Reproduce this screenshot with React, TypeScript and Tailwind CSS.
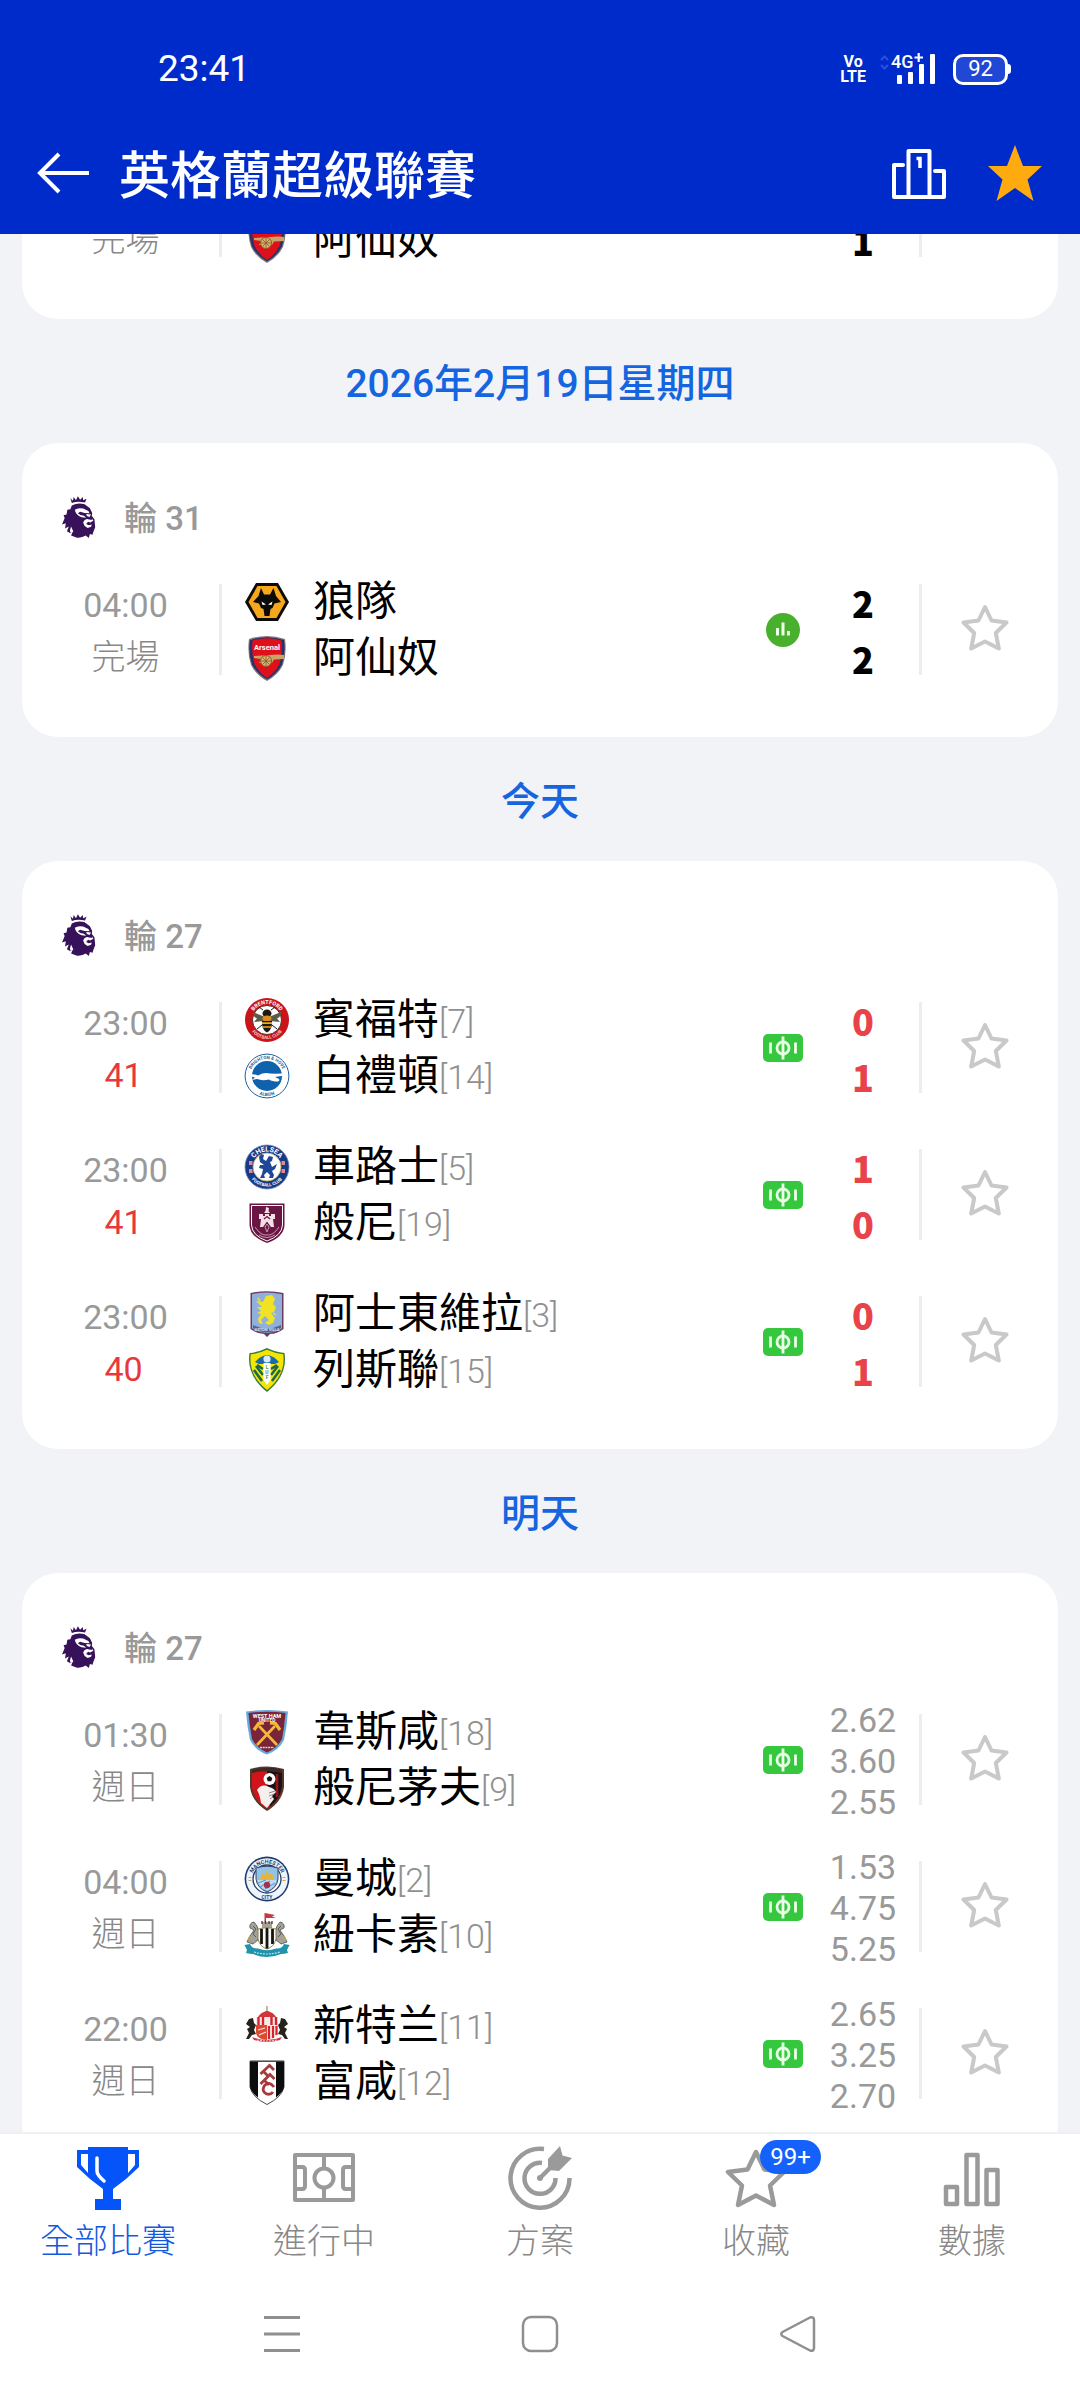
import type { ReactNode } from "react";

const FONT = "font-[Roboto,'Noto_Sans_CJK_TC',sans-serif]";

/* ---------- club crests ---------- */

function Crest({ children }: { children: ReactNode }) {
  return (
    <svg viewBox="0 0 46 46" className="size-[46px] shrink-0" aria-hidden="true">
      {children}
    </svg>
  );
}

const Wolves = () => (
  <Crest>
    <path d="M12 4H34L45 23L34 42H12L1 23Z" fill="#0d0b08" />
    <path d="M13.5 7H32.5L41.5 23L32.5 39H13.5L4.500 23Z" fill="#f5a81c" />
    <path d="M17 9L20 15.500H26L29.500 9L32 17L37 23L30.500 24.500L28.500 29L26.500 30L25.500 37H20.500L19.500 30L17 29L15 24.500L9 23L14.500 17Z" fill="#0d0b08" />
    <path d="M17.500 22.500L22 25.500L18.500 26Z M28.500 22.500L24 25.500L27.500 26Z" fill="#fff" />
  </Crest>
);

const Arsenal = () => (
  <Crest>
    <path d="M5 4Q23-2 41 4Q43 18 39 30Q34 40 23 46Q12 40 7 30Q3 18 5 4Z" fill="#8b7a72" />
    <path d="M6 5Q23-.5 40 5Q42 18 38 29.500Q33 39 23 44.500Q13 39 8 29.500Q4 18 6 5Z" fill="#23336f" />
    <path d="M8.500 5.500Q23 1 37.500 5.500Q39 18 35.500 29Q31 38 23 43Q15 38 10.500 29Q7 18 8.500 5.500Z" fill="#e0101b" />
    <text x="23" y="15" textAnchor="middle" fontSize="7.500" fontWeight="700" fill="#fff" fontFamily="Roboto">Arsenal</text>
    <path d="M10 21L34 19.500L40 20V24L30 24.500L28 28H15L17 24L10 23Z" fill="#c8a465" />
    <circle cx="22" cy="26" r="5.500" fill="#d9b270" stroke="#8e5a2c" strokeWidth="1" />
    <path d="M22 21V31M17 26H27M18.500 22.500L25.500 29.500M25.500 22.500L18.500 29.500" stroke="#8e5a2c" strokeWidth=".8" />
  </Crest>
);

const Brentford = () => (
  <Crest>
    <circle cx="23" cy="23" r="22" fill="#c9141c" />
    <circle cx="23" cy="23" r="14.500" fill="#fff" stroke="#3a0f0c" strokeWidth=".8" />
    <path id="brTop" d="M7 23A16 16 0 0 1 39 23" fill="none" />
    <path id="brBottom" d="M4 23A19 19 0 0 0 42 23" fill="none" />
    <text fontSize="5.500" fontWeight="700" fill="#fff" fontFamily="Roboto">
      <textPath href="#brTop" startOffset="50%" textAnchor="middle">BRENTFORD</textPath>
    </text>
    <text fontSize="4.500" fontWeight="700" fill="#f6c9c6" fontFamily="Roboto">
      <textPath href="#brBottom" startOffset="50%" textAnchor="middle">FOOTBALL CLUB</textPath>
    </text>
    <path d="M21 20L9 15Q9 20 13 21.500L10 25L20 24Z M25 20L37 15Q37 20 33 21.500L36 25L26 24Z" fill="#5d5a45" />
    <ellipse cx="23" cy="16.500" rx="4.500" ry="4" fill="#1d1a12" />
    <ellipse cx="23" cy="21.500" rx="4.500" ry="3" fill="#d98f1f" />
    <path d="M18 24H28Q28.500 33 23 35.500Q17.500 33 18 24Z" fill="#1d1a12" />
    <path d="M18 26.200H28M19 30H27" stroke="#f0a82a" strokeWidth="1.700" />
    <path d="M19 13L15 10M27 13L31 10M18 28L13 32M28 28L33 32" stroke="#1d1a12" strokeWidth="1" />
  </Crest>
);

const Brighton = () => (
  <Crest>
    <circle cx="23" cy="23" r="21.900" fill="#fff" stroke="#1c5f9f" strokeWidth="1" />
    <circle cx="23" cy="23" r="15" fill="#0f62ac" />
    <path id="bhTop" d="M6 23A17 17 0 0 1 40 23" fill="none" />
    <path id="bhBottom" d="M3 23A20 20 0 0 0 43 23" fill="none" />
    <text fontSize="4.500" fontWeight="700" fill="#1c5f9f" fontFamily="Roboto">
      <textPath href="#bhTop" startOffset="50%" textAnchor="middle">BRIGHTON &amp; HOVE</textPath>
    </text>
    <text fontSize="4.500" fontWeight="700" fill="#1c5f9f" fontFamily="Roboto">
      <textPath href="#bhBottom" startOffset="50%" textAnchor="middle">ALBION</textPath>
    </text>
    <path d="M2 21Q9 20.500 14 22.500Q20 19 26 20.500Q34 21 44 20Q38 23.500 31 24L35 26Q36 28 34 28.500Q28 28.500 25 26.500Q18 28 13 26L8 27L11 24.500Q6 24 2 21Z" fill="#fff" />
  </Crest>
);

const Chelsea = () => (
  <Crest>
    <circle cx="23" cy="23" r="22" fill="#173a86" stroke="#6d87b8" strokeWidth=".8" />
    <circle cx="23" cy="23" r="14" fill="#fff" stroke="#c9b46a" strokeWidth=".8" />
    <path id="chTop" d="M7.500 23A15.500 15.500 0 0 1 38.500 23" fill="none" />
    <path id="chBottom" d="M3.500 23A19.500 19.500 0 0 0 42.500 23" fill="none" />
    <text fontSize="7" fontWeight="700" fill="#fff" fontFamily="Roboto">
      <textPath href="#chTop" startOffset="50%" textAnchor="middle">CHELSEA</textPath>
    </text>
    <text fontSize="4.500" fontWeight="700" fill="#fff" fontFamily="Roboto">
      <textPath href="#chBottom" startOffset="50%" textAnchor="middle">FOOTBALL CLUB</textPath>
    </text>
    <path d="M5 17h3.500v4H5zM5 25h3.500v4H5zM37.500 17H41v4h-3.500zM37.500 25H41v4h-3.500z" fill="#d98a96" />
    <path d="M17 10L20 11L19 15L22 17L25 12L29 13L28 17L26 18L28 23L33 20L31 25L28 27L30 31L29 34H25L26 31L23 28L20 31L21 34H16L18 30L19 25L15 24L16 21L20 21L16 18L15 13Z" fill="#1e4796" />
  </Crest>
);

const Burnley = () => (
  <Crest>
    <path d="M5.500 3.500H40.500V25Q40 37 23 43Q6 37 5.500 25Z" fill="#6a1642" />
    <path d="M7.500 5.500H38.500V25Q38 35.500 23 41Q8 35.500 7.500 25Z" fill="none" stroke="#fff" strokeWidth="1" />
    <path d="M22 7L25 8L24.500 11L26 13H20L21.500 11Z" fill="#f4dfe6" />
    <path d="M15 14H19V16H21V14H25V16H27V14H31V19H29L30 27H27L23 21.500L19 27H16L17 19H15Z" fill="#f4dfe6" />
    <path d="M20 19L23 16.500L26 19" stroke="#6a1642" strokeWidth="1.300" fill="none" />
    <path d="M23 24L25 27L23 32L21 27Z M11 27Q17 36 23 35Q29 36 35 27" fill="none" stroke="#c795ad" strokeWidth="1" />
    <path d="M15 35Q23 40 31 35" stroke="#c795ad" strokeWidth="1" fill="none" />
  </Crest>
);

const Villa = () => (
  <Crest>
    <path d="M6.500 2Q23-1.500 39.500 2V38Q33 43 26 43L23 46L20 43Q13 43 6.500 38Z" fill="#6f3b58" />
    <path d="M8 3.200Q23 0 38 3.200V37.200Q32 41.500 23 42Q14 41.500 8 37.200Z" fill="#8fb0dd" />
    <path d="M9 34Q23 41 37 34V37Q32 41 23 41.500Q14 41 9 37Z" fill="#54658f" />
    <path d="M22 5L28 4L31 8L29 13L32 16L30 21L27 22L31 27L29 32L25 34L21 32L25 29L21 25L17 29L19 33L15 32L14 28L17 23L13 22L17 20L13 16L18 16L12 10L19 11Z" fill="#f2e225" />
    <path d="M14 7L16 10M32 24L29 22" stroke="#f2e225" strokeWidth="1.500" />
    <text x="23" y="40" textAnchor="middle" fontSize="4" fontWeight="700" fill="#dfe7f5" fontFamily="Roboto">ASTON VILLA</text>
  </Crest>
);

const Leeds = () => (
  <Crest>
    <path d="M23 1Q31 5 40.500 6Q44 28 23 45Q2 28 5.500 6Q15 5 23 1Z" fill="#3f7a3d" />
    <path d="M23 2.800Q31 6.500 39.200 7.300Q42 27.500 23 43Q4 27.500 6.800 7.300Q15 6.500 23 2.800Z" fill="#f5e600" />
    <path d="M11 15Q16 9 23 8Q30 9 35 15L31 17H15Z" fill="#1d6ba8" />
    <path d="M12 19L19 28M10 23L18 34M13 18L19 22M34 19L27 28M36 23L28 34M33 18L27 22" stroke="#1d6a4a" strokeWidth="2.600" />
    <path d="M19.500 16H26.500V33L23 38L19.500 33Z" fill="#fff" />
    <circle cx="23" cy="12" r="3.600" fill="#dceaf5" />
    <text x="23" y="22" textAnchor="middle" fontSize="5" fontWeight="700" fill="#6b8f3a" fontFamily="Roboto">L</text>
    <text x="23" y="27" textAnchor="middle" fontSize="5" fontWeight="700" fill="#6b8f3a" fontFamily="Roboto">U</text>
    <text x="23" y="32" textAnchor="middle" fontSize="5" fontWeight="700" fill="#6b8f3a" fontFamily="Roboto">F</text>
  </Crest>
);

const WestHam = () => (
  <Crest>
    <path d="M2 2.500Q23-.5 44 2.500Q43 17 40 31Q35 41 23 45.500Q11 41 6 31Q3 17 2 2.500Z" fill="#66a9dc" />
    <path d="M4.500 4Q23 1.500 41.500 4Q40.500 17 38 30Q33.500 39 23 43.500Q12.500 39 8 30Q5.500 17 4.500 4Z" fill="#7a2439" />
    <text x="23" y="8.500" textAnchor="middle" fontSize="5.500" fontWeight="700" fill="#fff" fontFamily="Roboto">WEST HAM</text>
    <text x="23" y="13" textAnchor="middle" fontSize="4.800" fontWeight="700" fill="#fff" fontFamily="Roboto">UNITED</text>
    <path d="M13 36L31 17M33 36L15 17" stroke="#f5b93a" strokeWidth="2.600" />
    <path d="M10 21L14.500 14.500L20 14M36 21L31.500 14.500L26 14" stroke="#f5b93a" strokeWidth="3.200" fill="none" />
    <path d="M16 38.500H30" stroke="#e9cdd3" strokeWidth="1.600" strokeDasharray="2 .7" />
  </Crest>
);

const Bournemouth = () => (
  <Crest>
    <path d="M6 4Q23-1 40 4V22Q38 37 23 46Q8 37 6 22Z" fill="#55382a" />
    <path d="M8 5Q23 1 38 5V22Q36 35.500 23 43.500Q10 35.500 8 22Z" fill="#d3131b" />
    <path d="M23 3Q31 3 38 5V22Q36 34 26 41.500L23 30Z" fill="#1a1315" />
    <path d="M8 4.800Q23 1 38 4.800V8Q23 4.500 8 8Z" fill="#3b2a25" />
    <path d="M33 9V32" stroke="#9e141c" strokeWidth="2.500" />
    <path d="M13 25Q18 18 25 22Q30 23 32 27L28 31L30 34L23 43L17 38Q16 30 13 25Z" fill="#f3efed" />
    <circle cx="25.500" cy="14" r="6" fill="#fff" />
    <path d="M25.500 11L28.300 13L27.300 16.300H23.700L22.700 13Z" fill="#1a1315" />
    <path d="M25 28L31 26M25 31L30 29M26 34L29 32" stroke="#8e8582" strokeWidth="1" />
  </Crest>
);

const ManCity = () => (
  <Crest>
    <circle cx="23" cy="23" r="22.400" fill="#1f3d70" />
    <circle cx="23" cy="23" r="20.800" fill="#eef4fb" />
    <circle cx="23" cy="23" r="14" fill="#fff" stroke="#1f3d70" strokeWidth="1.300" />
    <path id="mcTop" d="M7.500 23A15.500 15.500 0 0 1 38.500 23" fill="none" />
    <text fontSize="5.500" fontWeight="700" fill="#1f3d70" fontFamily="Roboto">
      <textPath href="#mcTop" startOffset="50%" textAnchor="middle">MANCHESTER</textPath>
    </text>
    <text x="23" y="42.500" textAnchor="middle" fontSize="5" fontWeight="700" fill="#1f3d70" fontFamily="Roboto">CITY</text>
    <path d="M12 12Q23 8.500 34 12V23Q33 32 23 36Q13 32 12 23Z" fill="#8fc3ea" stroke="#39425c" strokeWidth="1" />
    <path d="M13.500 24H32.500Q31 31 23 34.500Q15 31 13.500 24Z" fill="#bfdcf2" />
    <path d="M16 23L18 17L21 19L23 13L25 19L28 17L30 23Z" fill="#e4b443" />
    <path d="M14 27L22 24M16 31L26 25M21 33L31 27" stroke="#5f9ed0" strokeWidth="1.200" />
    <circle cx="23" cy="29" r="3.200" fill="#a7314d" />
    <path d="M4.500 21.500h3M4.500 24.500h3M38.500 21.500h3M38.500 24.500h3" stroke="#c9a94c" strokeWidth="1.200" />
  </Crest>
);

const Newcastle = () => (
  <Crest>
    <path d="M21 1L31 3L28 4.500L32 6L22 6V11H20.500V1Z" fill="#c53a3f" />
    <path d="M18 10H28V18H18Z" fill="#a8a39a" />
    <path d="M18 9v3M21.500 9v3M25 9v3M28 9v3" stroke="#3b3936" strokeWidth="1.300" />
    <path d="M10 10Q5 11 6 16L10 18L6 24L3 30L9 32L14 28L15 20L13 14Z M36 10Q41 11 40 16L36 18L40 24L43 30L37 32L32 28L31 20L33 14Z" fill="#a3a19c" stroke="#514f4b" strokeWidth=".8" />
    <path d="M9 14L12 17L9 22L12 25M37 14L34 17L37 22L34 25" stroke="#5d5b57" strokeWidth="1" fill="none" />
    <path d="M14 17Q23 14 32 17V27Q30 35 23 37Q16 35 14 27Z" fill="#f7f7f5" />
    <path d="M17.500 17V32M23 16V37M28.500 17V32" stroke="#15140f" strokeWidth="2.800" />
    <path d="M14 17Q23 14 32 17V27Q30 35 23 37Q16 35 14 27Z" fill="none" stroke="#8d7a3a" strokeWidth=".9" />
    <path d="M.5 33L6 32Q8 37 14 36.500Q23 40 32 36.500Q38 37 40 32L45.500 33L43 38L44 41Q40 42 37 42Q23 48 9 42Q6 42 2 41L3 38Z" fill="#1f93ad" />
    <path d="M10 40Q23 44 36 40" stroke="#b9e0e8" strokeWidth="1.200" strokeDasharray="2 1" fill="none" />
    <path d="M6 24L4 28M40 24L42 28" stroke="#caa23b" strokeWidth="1.500" />
  </Crest>
);

const Sunderland = () => (
  <Crest>
    <path d="M22.500 3H23.500V9H22.500Z" fill="#8b6b5b" />
    <path d="M14 14Q16 10 22 8H24Q30 10 32 14Z" fill="#d2343a" />
    <path d="M12 14H34V30Q33 36 23 38Q13 36 12 30Z" fill="#f1ecea" />
    <path d="M14.500 14V22M19 14V22M27.500 14V22M32 14V22" stroke="#d8232c" strokeWidth="2.400" />
    <path d="M12 22H23V37Q13 36 12 30Z" fill="#dd4a34" />
    <path d="M25 23V36M29 23V35M32.500 23V32" stroke="#d8232c" strokeWidth="2.200" />
    <path d="M14 27L21 25M15 32L22 29" stroke="#f6e2dc" strokeWidth="1.300" />
    <path d="M5 16L9 15L10 20L12 22L10 27L12 31L8 32L5 36H2L5 30L3 26L6 24L2 21Z M41 16L37 15L36 20L34 22L36 27L34 31L38 32L41 36H44L41 30L43 26L40 24L44 21Z" fill="#26221d" />
    <path d="M8 34Q23 40 38 34L36 37Q23 41 10 37Z" fill="#d2343a" />
    <path d="M13 37Q23 39 33 37" stroke="#f6d9d8" strokeWidth="1" strokeDasharray="2 1" fill="none" />
  </Crest>
);

const Fulham = () => (
  <Crest>
    <path d="M6 2H40V28Q38 38 23 45.500Q8 38 6 28Z" fill="#fff" stroke="#333" strokeWidth=".9" />
    <path d="M6 2H14V38.500Q7 33 6 28Z M32 2H40V28Q39 33 32 38.500Z" fill="#0c0c0c" />
    <path d="M6 2.400H40" stroke="#444" strokeWidth="1" />
    <g fill="none" stroke="#a83a3c" strokeWidth="2.800">
      <path d="M16.500 15L25.500 6.500L30 11M19.500 12.500L24 17" />
      <path d="M16.500 25L26 15.500L30.500 20M20.500 21.500L25 26" />
      <path d="M30 28Q25 21.500 20.500 26.500Q17 32 22.500 35Q27 36 29 33" />
    </g>
  </Crest>
);

/* ---------- icons ---------- */

const LeagueLion = () => (
  <svg viewBox="0 0 180 168" className="h-14 w-[60px] shrink-0" aria-hidden="true">
    <g transform="translate(-6 -5) scale(1.130 1.190)">
      <path
        fill="#37125a"
        d="M46 25L53 31L55 22L61 30L66 20L72 29L79 22L80 30L89 26L85 36Q66 31 50 37Z M50 43Q66 35 84 40L98 50L104 62L103 70L110 78L111 88L112 98L107 110L105 117L98 115L95 125L87 119Q76 126 62 124L48 119L52 110L46 113L37 108L42 96L32 101L34 88L24 91L31 75L28 68L36 66L38 54L46 53Z"
      />
      <path
        fill="#fff"
        d="M58 54Q66 48 80 51L94 57L97 63L84 62L72 59L66 63Q72 69 82 69L88 74L76 73Q60 68 58 54Z M88 65L101 66L97 72L90 70Z M84 80Q92 75 96 79L104 76L107 82L99 86L93 84L88 90L95 93L103 91L101 97L92 100L84 95L80 86Z M48 96L54 109L47 113L45 106Z"
      />
      <path fill="#37125a" d="M97 74L106 73L104 79L99 79Z" />
    </g>
  </svg>
);

const StarOutline = () => (
  <svg viewBox="0 0 48 48" className="size-12" fill="none" stroke="#c9c9c9" strokeWidth="4" strokeLinejoin="round" aria-hidden="true">
    <path d="M24 3L30.500 16.500L45.500 18.500L34.800 29L37.800 44.500L24 37.500L10.200 44.500L13.200 29L2.500 18.500L17.500 16.500Z" />
  </svg>
);

const LivePitch = () => (
  <svg viewBox="0 0 40 28" className="h-7 w-10" aria-label="直播">
    <rect width="40" height="28" rx="5" fill="#35c83e" />
    <g fill="none" stroke="#e9ffe6" strokeWidth="2.800">
      <circle cx="20" cy="14" r="6" />
      <path d="M20 2.500V25.500M7.500 8.500V19.500M32.500 8.500V19.500" />
    </g>
  </svg>
);

const StatsBadge = () => (
  <svg viewBox="0 0 34 34" className="size-[34px]" aria-label="統計">
    <circle cx="17" cy="17" r="17" fill="#48b02c" />
    <path d="M11.500 15V22.500M17 9.500V22.500M22.500 18V22.500" stroke="#e9ffe6" strokeWidth="3" />
  </svg>
);

const TrophyIcon = () => (
  <svg viewBox="0 0 64 64" className="size-16" fill="#0454fa" aria-hidden="true">
    <path d="M12 1H52V4H63V21L50 33L37 43V53H45V64H19V53H27V43L14 33L1 21V4H12Z M5 8V19L12 27V8Z M52 8V27L59 19V8Z" fillRule="evenodd" />
    <path d="M21 12V25Q21 29 28 35" fill="none" stroke="#fff" strokeWidth="3.500" strokeLinecap="round" />
  </svg>
);

const PitchIcon = () => (
  <svg viewBox="0 0 64 64" className="size-16" fill="none" stroke="#9a9a9a" strokeWidth="4" strokeLinejoin="round" aria-hidden="true">
    <rect x="3" y="9" width="58" height="45" />
    <circle cx="32" cy="32" r="9.500" />
    <path d="M32 9V22M32 42V54M4 21H10Q13 21 13 24V40Q13 43 10 43H4M60 21H54Q51 21 51 24V40Q51 43 54 43H60" />
  </svg>
);

const TargetIcon = () => (
  <svg viewBox="0 0 64 64" className="size-16" fill="none" stroke="#9a9a9a" strokeWidth="4.500" aria-hidden="true">
    <path d="M36 3A29.500 29.500 0 1 0 61.500 32" />
    <path d="M34 17A15.500 15.500 0 1 0 47.500 32" />
    <path d="M32 32L45 19" />
    <circle cx="32" cy="32" r="3" fill="#9a9a9a" stroke="none" />
    <path d="M40 13L52 0L54.500 9.500L64 12L51 25L40 24Z" fill="#9a9a9a" stroke="none" />
  </svg>
);

const TabStarIcon = () => (
  <svg viewBox="0 0 64 64" className="size-16" fill="none" stroke="#9a9a9a" strokeWidth="4.500" strokeLinejoin="round" aria-hidden="true">
    <path d="M32 6L40.500 23.500L60 26L46 39.500L50 59L32 49.500L14 59L18 39.500L4 26L23.500 23.500Z" />
  </svg>
);

const BarsIcon = () => (
  <svg viewBox="0 0 64 64" className="size-16" fill="none" stroke="#9a9a9a" strokeWidth="4.500" strokeLinejoin="round" aria-hidden="true">
    <path d="M6 41H17V58H6ZM26.500 9H37.500V58H26.500ZM46.500 24H57.500V58H46.500Z" />
  </svg>
);

/* ---------- data ---------- */

type Team = { name: string; rank?: number; crest: () => ReactNode };
type Match = {
  time?: string;
  status: string;
  live?: boolean;
  home?: Team;
  away: Team;
  marker?: "live" | "stats";
  scores?: string[];
  odds?: string[];
};
type Day = { label: string; round: string; matches: Match[] };

const arsenal: Team = { name: "阿仙奴", crest: Arsenal };

const days: Day[] = [
  {
    label: "2026年2月19日星期四",
    round: "輪 31",
    matches: [
      { time: "04:00", status: "完場", home: { name: "狼隊", crest: Wolves }, away: arsenal, marker: "stats", scores: ["2", "2"] },
    ],
  },
  {
    label: "今天",
    round: "輪 27",
    matches: [
      { time: "23:00", status: "41", live: true, home: { name: "賓福特", rank: 7, crest: Brentford }, away: { name: "白禮頓", rank: 14, crest: Brighton }, marker: "live", scores: ["0", "1"] },
      { time: "23:00", status: "41", live: true, home: { name: "車路士", rank: 5, crest: Chelsea }, away: { name: "般尼", rank: 19, crest: Burnley }, marker: "live", scores: ["1", "0"] },
      { time: "23:00", status: "40", live: true, home: { name: "阿士東維拉", rank: 3, crest: Villa }, away: { name: "列斯聯", rank: 15, crest: Leeds }, marker: "live", scores: ["0", "1"] },
    ],
  },
  {
    label: "明天",
    round: "輪 27",
    matches: [
      { time: "01:30", status: "週日", home: { name: "韋斯咸", rank: 18, crest: WestHam }, away: { name: "般尼茅夫", rank: 9, crest: Bournemouth }, marker: "live", odds: ["2.62", "3.60", "2.55"] },
      { time: "04:00", status: "週日", home: { name: "曼城", rank: 2, crest: ManCity }, away: { name: "紐卡素", rank: 10, crest: Newcastle }, marker: "live", odds: ["1.53", "4.75", "5.25"] },
      { time: "22:00", status: "週日", home: { name: "新特兰", rank: 11, crest: Sunderland }, away: { name: "富咸", rank: 12, crest: Fulham }, marker: "live", odds: ["2.65", "3.25", "2.70"] },
    ],
  },
];

const tabs = [
  { label: "全部比賽", icon: TrophyIcon, active: true },
  { label: "進行中", icon: PitchIcon },
  { label: "方案", icon: TargetIcon },
  { label: "收藏", icon: TabStarIcon, badge: "99+" },
  { label: "數據", icon: BarsIcon },
];

/* ---------- page parts ---------- */

function TeamLine({ team }: { team?: Team }) {
  if (!team) return <div className="h-14" />;
  const Logo = team.crest;
  return (
    <div className="flex h-14 items-center">
      <Logo />
      <span className="ml-[23px] text-[42px] leading-[56px] text-black">{team.name}</span>
      {team.rank !== undefined && (
        <span className="pt-[3px] text-[34px] leading-[52px] font-light text-[#909090]">[{team.rank}]</span>
      )}
    </div>
  );
}

function MatchRow({ match }: { match: Match }) {
  return (
    <li className="flex h-[147px] items-center">
      <div className="flex w-[197px] shrink-0 flex-col items-center pt-[3px] pl-[10px] text-[34px] leading-[52px] text-[#999999]">
        <span className="h-[52px]">{match.time}</span>
        <span className={match.live ? "mr-1 text-[#e8383d]" : "font-light text-[#888888]"}>{match.status}</span>
      </div>
      <div className="h-[91px] w-[3px] bg-[#ededed]" />
      <div className="min-w-0 flex-1 pl-[22px]">
        <TeamLine team={match.home} />
        <TeamLine team={match.away} />
      </div>
      <div className="flex w-12 shrink-0 justify-center">
        {match.marker === "live" && <LivePitch />}
        {match.marker === "stats" && <StatsBadge />}
      </div>
      <div className="flex w-28 shrink-0 flex-col items-center">
        {match.scores?.map((score, i) => (
          <span
            key={i}
            className={`h-14 font-['Noto_Sans_CJK_TC',sans-serif] text-4xl leading-[56px] font-black ${match.live ? "text-[#e8434a]" : "text-black"}`}
          >
            {score}
          </span>
        ))}
        {match.odds && (
          <div className="flex flex-col pt-[3px] text-[34px] leading-[41px] text-[#999999]">
            {match.odds.map((odd) => (
              <span key={odd}>{odd}</span>
            ))}
          </div>
        )}
      </div>
      <div className="h-[91px] w-[3px] bg-[#ededed]" />
      <button type="button" aria-label="加入收藏" className="flex w-[136px] shrink-0 items-center justify-center pr-[10px] pb-[3px]">
        <StarOutline />
      </button>
    </li>
  );
}

function StatusBar() {
  return (
    <div className="flex h-[118px] items-center justify-between pt-5 pr-[69px] pl-[158px]">
      <span className="text-[37px] leading-[48px]">23:41</span>
      <div className="flex items-center">
        <div className="flex flex-col items-center text-base leading-[15px] font-bold">
          <span>Vo</span>
          <span>LTE</span>
        </div>
        <svg viewBox="0 0 56 32" className="ml-[14px] h-8 w-14 overflow-visible" aria-hidden="true">
          <path d="M1 7L4.500 3.500L8 7M1 12L4.500 15.500L8 12" fill="none" stroke="#2b50da" strokeWidth="2" />
          <text x="11" y="15" fontSize="18" fontWeight="500" fill="#fff" fontFamily="Roboto">4G</text>
          <path d="M34.500 4.500H43M38.700 0V9" stroke="#fff" strokeWidth="2.200" />
          <g fill="#fff">
            <rect x="17" y="22" width="5" height="9" rx="1" />
            <rect x="28" y="19" width="5" height="12" rx="1" />
            <rect x="39" y="11" width="5" height="20" rx="1" />
            <rect x="50" y="1" width="5" height="30" rx="1" />
          </g>
        </svg>
        <div className="ml-[17px] flex h-[31px] w-[55px] items-center justify-center rounded-[10px] border-3 border-white bg-[#2148d4] text-[22px] leading-none">
          92
        </div>
        <div className="h-[10px] w-[3px] rounded-r-sm bg-white" />
      </div>
    </div>
  );
}

function Header() {
  return (
    <header className="relative z-10 shrink-0 bg-[#002bcb] text-white">
      <StatusBar />
      <div className="flex h-[116px] items-center pr-[37px] pb-[7px] pl-[36px]">
        <button type="button" aria-label="返回">
          <svg viewBox="0 0 54 44" className="h-11 w-[54px]" fill="none" stroke="#fff" strokeWidth="4" aria-hidden="true">
            <path d="M23 3L4 22L23 41M4 22H53" />
          </svg>
        </button>
        <h1 className="ml-[29px] flex-1 pt-[9px] text-[51px] leading-[76px] font-medium">英格蘭超級聯賽</h1>
        <button type="button" aria-label="積分榜">
          <svg viewBox="0 0 56 54" className="h-[54px] w-14" fill="none" stroke="#fff" strokeWidth="4" strokeLinejoin="round" strokeLinecap="round" aria-hidden="true">
            <path d="M17.500 51V5H38.500V51M12 19H3V51H53V25H44" />
            <path d="M25.500 12.500H29V22" strokeWidth="3.500" strokeLinejoin="miter" strokeLinecap="butt" />
          </svg>
        </button>
        <button type="button" aria-label="取消收藏聯賽" className="ml-10">
          <svg viewBox="0 0 56 58" className="h-[58px] w-14" fill="#ffab10" aria-hidden="true">
            <path d="M28 1L36 22H55L40.500 35.500L46.500 57L28 44L9.500 57L15.500 35.500L1 22H20Z" />
          </svg>
        </button>
      </div>
    </header>
  );
}

export default function App() {
  return (
    <div className={`flex h-screen flex-col overflow-hidden bg-[#f2f3f7] ${FONT}`} lang="zh-Hant">
      <Header />
      <main className="min-h-0 flex-1 overflow-hidden">
        <ul className="mx-[22px] -mt-24 rounded-[36px] bg-white pb-[34px]">
          <MatchRow match={{ status: "完場", away: arsenal, scores: ["", "1"] }} />
        </ul>
        {days.map((day) => (
          <section key={day.label}>
            <h2 className="flex h-[124px] items-center justify-center pt-[5px] text-[39px] leading-[56px] font-medium text-[#1565e0]">
              {day.label}
            </h2>
            <div className="mx-[22px] rounded-[36px] bg-white pt-9 pb-[34px]">
              <div className="flex h-[77px] items-center pl-[33px]">
                <LeagueLion />
                <span className="ml-[9px] pt-[3px] text-[33px] leading-[48px] font-medium text-[#999999]">{day.round}</span>
              </div>
              <ul>
                {day.matches.map((match, i) => (
                  <MatchRow key={i} match={match} />
                ))}
              </ul>
            </div>
          </section>
        ))}
      </main>
      <footer className="relative shrink-0 border-t-2 border-[#f0f0f2] bg-white">
        <nav aria-label="主選單" className="grid grid-cols-5 pt-3">
          {tabs.map(({ label, icon: Icon, active, badge }) => (
            <a key={label} href="#" className={`flex flex-col items-center ${active ? "text-[#1259e0]" : "text-[#888888]"}`}>
              <span className="relative">
                <Icon />
                {badge && (
                  <span className="absolute -top-[6px] left-9 flex h-[34px] w-[61px] items-center justify-center rounded-full bg-[#1462fb] text-2xl leading-none text-white">
                    {badge}
                  </span>
                )}
              </span>
              <span className="mt-[5px] text-[34px] leading-[52px] font-light">{label}</span>
            </a>
          ))}
        </nav>
        <div className="grid h-[133px] grid-cols-3 items-center justify-items-center px-[14.2%]">
          <button type="button" aria-label="最近使用">
            <svg viewBox="0 0 38 38" className="size-[38px]" stroke="#8f8f8f" strokeWidth="3" aria-hidden="true">
              <path d="M1 2.500H37M1 19H37M1 35.500H37" />
            </svg>
          </button>
          <button type="button" aria-label="主畫面">
            <svg viewBox="0 0 38 38" className="size-[38px]" fill="none" stroke="#8f8f8f" strokeWidth="2.500" aria-hidden="true">
              <rect x="2" y="2" width="34" height="34" rx="8" />
            </svg>
          </button>
          <button type="button" aria-label="返回上一頁">
            <svg viewBox="0 0 38 38" className="size-[38px]" fill="none" stroke="#8f8f8f" strokeWidth="2.500" strokeLinejoin="round" aria-hidden="true">
              <path d="M3.500 17L31 2.500Q35 1.500 35 5V33Q35 36.500 31 35.500L3.500 21Q1 19 3.500 17Z" />
            </svg>
          </button>
        </div>
      </footer>
    </div>
  );
}
